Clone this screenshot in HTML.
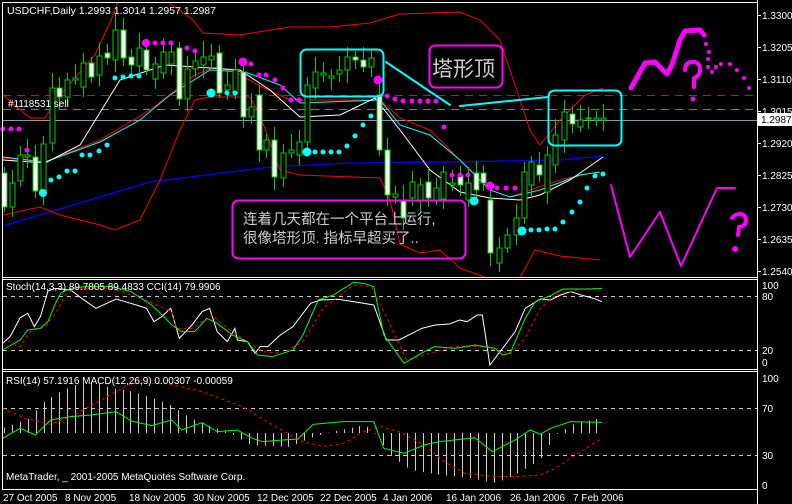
<!DOCTYPE html>
<html><head><meta charset="utf-8">
<style>
html,body{margin:0;padding:0;background:#000;width:792px;height:504px;overflow:hidden}
svg{display:block}
text{font-family:"Liberation Sans","Noto Sans CJK SC",sans-serif;fill:#fff}
</style></head><body>
<svg id="s" width="792" height="504" viewBox="0 0 792 504" font-size="10" xmlns="http://www.w3.org/2000/svg">
<rect width="792" height="504" fill="#000"/>
<g id="g"></g>
<g stroke="#fff" fill="none" stroke-width="1">
<line x1="2.5" y1="2.5" x2="757.5" y2="2.5"/>
<line x1="2.5" y1="2.5" x2="2.5" y2="489"/>
<line x1="757.5" y1="0" x2="757.5" y2="504"/>
<line x1="2" y1="277.5" x2="757" y2="277.5"/>
<line x1="2" y1="279.5" x2="757" y2="279.5"/>
<line x1="2" y1="369.5" x2="757" y2="369.5"/>
<line x1="2" y1="371.5" x2="757" y2="371.5"/>
<line x1="2" y1="489.5" x2="757" y2="489.5"/>
</g>
<text x="7" y="14" font-size="10.5">USDCHF,Daily  1.2993 1.3014 1.2957 1.2987</text>
<text x="8" y="107">#1118531 sell</text>
<g font-size="10">
<text x="762" y="19">1.3300</text><text x="762" y="51">1.3205</text><text x="762" y="83">1.3110</text>
<text x="762" y="115">1.3015</text><text x="762" y="147">1.2920</text><text x="762" y="179">1.2825</text>
<text x="762" y="211">1.2730</text><text x="762" y="243">1.2635</text><text x="762" y="275">1.2540</text>
<rect x="758" y="113" width="34" height="13" fill="#fff"/>
<text x="761" y="123" style="fill:#000">1.2987</text>
<text x="762" y="289">100</text><text x="762" y="300">80</text><text x="762" y="354">20</text><text x="762" y="366">0</text>
<text x="762" y="382">100</text><text x="762" y="412">70</text><text x="762" y="459">30</text><text x="762" y="489">0</text>
</g>
<text x="6" y="290">Stoch(14,3,3) 89.7805 89.4833  CCI(14) 79.9906</text>
<text x="6" y="384">RSI(14) 57.1916  MACD(12,26,9) 0.00307 -0.00059</text>
<text x="6" y="480">MetaTrader, _ 2001-2005 MetaQuotes Software Corp.</text>
<g font-size="10">
<text x="3" y="501">27 Oct 2005</text><text x="65" y="501">8 Nov 2005</text><text x="129" y="501">18 Nov 2005</text>
<text x="193" y="501">30 Nov 2005</text><text x="257" y="501">12 Dec 2005</text><text x="320" y="501">22 Dec 2005</text>
<text x="383" y="501">4 Jan 2006</text><text x="446" y="501">16 Jan 2006</text><text x="510" y="501">26 Jan 2006</text>
<text x="573" y="501">7 Feb 2006</text>
</g>
<g fill="none" stroke-linejoin="round" stroke-linecap="round">
<rect x="300.5" y="49.5" width="83" height="47" rx="6" stroke="#0ff" stroke-width="2"/>
<rect x="548.5" y="90.5" width="73" height="55" rx="6" stroke="#0ff" stroke-width="2"/>
<line x1="386" y1="62" x2="450" y2="105" stroke="#0ff" stroke-width="2"/>
<line x1="460" y1="106" x2="548" y2="97" stroke="#0ff" stroke-width="2"/>
<rect x="429.5" y="45.5" width="73" height="42" rx="6" stroke="#f0f" stroke-width="2"/>
<rect x="232.5" y="200.5" width="233" height="58" rx="6" stroke="#f0f" stroke-width="2"/>
<polyline points="631,88 640,72 645,63 655,62 663,70 667,74 672,65 680,40 685,31 700,30 704,35" stroke="#f0f" stroke-width="5"/>
<polyline points="611,185 630,257 660,212 681,266 717,188 735,188" stroke="#f0f" stroke-width="2"/>
<path d="M685,70 q0,-8 8,-8 q7,0 7,8 q0,6 -6,8 l0,9" stroke="#f0f" stroke-width="4"/>
<path d="M732,218 q3,-4 8,-4 q6,0 6,7 q0,5 -7,6 l-1,8" stroke="#f0f" stroke-width="4"/>
</g>
<g fill="#f0f">
<circle cx="693" cy="99" r="2.5"/><circle cx="735" cy="249" r="3"/>
<circle cx="706" cy="44" r="2"/><circle cx="709" cy="52" r="2"/><circle cx="708" cy="59" r="2"/><circle cx="708" cy="67" r="2"/><circle cx="712" cy="72" r="2"/><circle cx="716" cy="67" r="2"/><circle cx="721" cy="64" r="2"/><circle cx="730" cy="64" r="2"/><circle cx="737" cy="70" r="2"/><circle cx="744" cy="78" r="2"/><circle cx="749" cy="88" r="2"/>
</g>
<text x="432" y="76" style="font-size:21px;fill:#ccc">塔形顶</text>
<text x="243" y="224" style="font-size:14.5px;fill:#ccc">连着几天都在一个平台上运行,</text>
<text x="243" y="243" style="font-size:14.5px;fill:#ccc">很像塔形顶. 指标早超买了..</text>
</svg>
<script>
var g=document.getElementById('g'),NS='http://www.w3.org/2000/svg';
function el(t,a){var e=document.createElementNS(NS,t);for(var k in a)e.setAttribute(k,a[k]);g.appendChild(e);return e;}
function pl(pts,c,w,d){el('polyline',{points:pts.map(function(p){return p[0]+','+p[1]}).join(' '),fill:'none',stroke:c,'stroke-width':w||1,'stroke-dasharray':d||'none'});}
el('line',{x1:3,y1:95.5,x2:757,y2:95.5,stroke:'#f00','stroke-dasharray':'8,6'});
el('line',{x1:3,y1:109.5,x2:757,y2:109.5,stroke:'#0c0','stroke-dasharray':'8,6'});
el('line',{x1:3,y1:120.5,x2:757,y2:120.5,stroke:'#8899aa'});
[296.5,350.5,408.5,455.5].forEach(function(y){el('line',{x1:3,y1:y,x2:757,y2:y,stroke:'#ccc','stroke-dasharray':'4,4'});});
pl([[3,226],[150,182],[270,167],[350,163],[450,162],[560,160],[603,156]],'#00f',1.3);
pl([[3,95],[30,118],[45,118],[60,95],[95,55],[112,18],[118,2]],'#f00');
pl([[168,2],[193,20],[203,33],[240,35],[290,27],[330,27],[370,23],[400,14],[460,12],[480,20],[500,40],[515,85],[530,130],[540,145],[560,120],[585,95],[603,88]],'#f00');
pl([[3,158],[45,162],[100,140],[150,110],[195,75],[215,67],[235,72],[260,86],[290,100],[330,100],[380,100],[400,118],[430,130],[460,160],[490,190],[510,197],[530,190],[560,180],[590,173]],'#f00');
pl([[3,215],[40,207],[60,215],[100,225],[115,230],[140,220],[160,180],[180,130],[195,100],[210,97],[250,97],[260,115],[280,170],[300,175],[380,178],[390,200],[400,244],[420,253],[440,250],[460,268],[487,278]],'#f00');
pl([[520,278],[535,250],[560,256],[600,260]],'#f00');
pl([[3,157],[45,162],[100,142],[140,120],[170,95],[210,70],[245,72],[280,85],[300,103],[380,100],[400,125],[430,135],[460,160],[490,190],[510,197],[540,190],[580,175],[600,172]],'#0ff');
pl([[3,160],[45,163],[80,145],[120,80],[165,65],[240,70],[270,90],[300,117],[340,115],[375,98],[400,130],[430,170],[460,192],[490,198],[520,200],[540,195],[570,180],[603,157]],'#fff');
var C=[[4,173,207,1],[12,183,207,0],[20,155,181,0],[27,155,157,0],[35,157,191,1],[43,144,193,0],[52,88,143,0],[59,88,97,1],[67,80,97,0],[75,78,80,0],[83,63,87,0],[91,63,77,1],[99,56,75,0],[107,53,58,1],[115,30,60,0],[123,30,58,1],[131,57,65,1],[139,48,66,0],[146,50,70,1],[155,64,79,0],[163,52,73,0],[171,52,64,0],[179,48,99,1],[187,69,99,0],[195,61,69,0],[203,57,65,0],[211,56,60,0],[219,53,93,1],[227,85,90,0],[235,70,93,0],[243,72,117,1],[251,107,117,0],[259,95,150,1],[266,140,150,0],[274,140,177,1],[283,153,178,0],[291,150,153,0],[299,142,155,0],[307,85,142,0],[315,72,88,0],[323,73,75,0],[331,76,78,0],[339,70,74,0],[347,57,70,0],[355,57,60,1],[363,60,67,1],[371,58,67,0],[379,95,150,1],[387,150,195,1],[395,194,197,0],[403,200,218,1],[412,182,198,0],[420,185,200,0],[428,182,198,1],[436,188,200,0],[443,172,199,0],[452,183,185,0],[460,175,185,1],[468,183,200,0],[476,173,190,1],[483,173,183,1],[490,200,253,1],[499,248,263,0],[507,235,248,0],[516,218,235,0],[524,172,218,0],[531,162,185,0],[539,165,175,1],[547,155,192,0],[555,135,165,0],[564,112,140,0],[572,114,124,1],[580,120,127,0],[588,118,119,0],[596,118,120,0],[603,118,120,0]];
C.forEach(function(c,i){var w=((i*7)%11)+6;el('line',{x1:c[0]+.5,y1:c[1]-w,x2:c[0]+.5,y2:c[2]+(((i*5)%9)+5),stroke:'#0c0'});
el('rect',{x:c[0]-2,y:c[1],width:5,height:Math.max(c[2]-c[1],1),fill:c[3]?'#fff':'#000',stroke:'#0c0','stroke-width':1});});
function dots(a,col){a.forEach(function(p){el('circle',{cx:p[0],cy:p[1],r:p[2]||2.5,fill:col});});}
dots([[3,129],[11,129],[19,129],[27,150],[146,43,4],[155,43],[163,43],[171,43],[187,48],[195,51],[243,62,4.5],[251,64],[259,75],[266,75],[275,80],[283,88],[291,100],[299,100],[378,80,4.5],[387,96],[395,99],[403,101],[412,101],[420,101],[428,101],[436,101],[444,127],[452,175],[460,175],[468,175],[490,186,4.5],[497,188],[506,188],[515,188]],'#f0f');
dots([[43,193,4],[51,180],[59,177],[67,171],[75,171],[82,155],[90,155],[99,151],[107,145],[115,78],[123,77],[131,76],[139,76],[211,93,4.5],[227,93],[235,93],[307,152,4.5],[315,152],[323,152],[331,152],[339,152],[347,146],[355,136],[363,125],[371,116],[474,201,4.5],[522,231,4.5],[531,230],[539,230],[547,229],[555,229],[563,222],[572,212],[580,202],[587,188],[595,176],[603,174]],'#0ff');
function Z(a){return a.map(function(p){return [p[0]/1.98,p[1]/3+275];});}
pl(Z([[5,205],[20,185],[40,128],[55,115],[68,155],[80,125],[95,48],[110,40],[140,45],[160,68],[190,100],[230,72],[270,90],[290,100],[305,140],[320,125],[338,100],[355,190],[380,150],[400,110],[415,100],[430,170],[450,200],[465,160],[470,195],[490,200],[505,235],[515,215],[530,215],[555,180],[580,155],[615,85],[635,75],[670,73],[700,80],[740,90],[765,195],[790,195],[835,160],[862,150],[890,147],[910,135],[925,140],[945,120],[955,120],[970,270],[990,230],[1020,170],[1040,100],[1070,72],[1090,75],[1110,60],[1130,50],[1155,62],[1175,70],[1192,80]]),'#fff');
pl(Z([[5,190],[40,215],[60,170],[90,155],[110,115],[130,60],[150,40],[220,40],[280,70],[340,110],[350,160],[380,160],[420,120],[450,160],[480,190],[520,230],[560,235],[600,200],[640,100],[670,65],[700,30],[735,35],[770,140],[805,255],[840,240],[900,215],[960,215],[980,225],[1010,235],[1040,190],[1070,100],[1100,60],[1150,42],[1192,40]]),'#f00',1,'3,3');
pl(Z([[5,225],[40,195],[55,165],[80,160],[95,140],[110,85],[120,55],[140,40],[170,35],[220,35],[260,50],[300,90],[325,125],[340,150],[360,170],[385,170],[410,130],[430,145],[460,180],[490,200],[510,240],[540,245],[580,225],[600,180],[630,75],[660,60],[700,22],[720,25],[740,35],[760,180],[800,265],[840,230],[860,215],[900,220],[940,210],[980,220],[995,240],[1010,235],[1040,130],[1060,80],[1090,62],[1115,42],[1170,42],[1192,40]]),'#0f0');
var K=[[3,428],[30,418],[40,404],[50,398],[60,392],[75,385],[95,383],[110,388],[130,391],[150,397],[170,405],[190,418],[215,428],[230,433],[250,445],[290,447],[310,438],[330,432],[350,428],[365,425],[375,433],[390,455],[410,470],[440,475],[470,478],[495,483],[515,475],[540,460],[555,435],[575,423],[603,418]];
function interp(x){for(var i=1;i<K.length;i++){if(x<=K[i][0]){var a=K[i-1],b=K[i];return a[1]+(b[1]-a[1])*(x-a[0])/(b[0]-a[0]);}}return K[K.length-1][1];}
for(var x=4;x<=604;x+=7.9){var y=interp(x);el('line',{x1:Math.round(x)+.5,y1:433,x2:Math.round(x)+.5,y2:y,stroke:'#ccc'});}
pl(Z([[5,400],[50,430],[100,448],[140,425],[200,375],[260,325],[330,325],[400,350],[480,395],[540,450],[600,500],[640,515],[680,505],[720,470],[755,455],[790,470],[840,510],[880,560],[920,595],[980,605],[1020,605],[1070,600],[1100,580],[1140,540],[1190,492]]),'#f00',1,'3,3');
pl(Z([[5,490],[40,460],[70,480],[100,435],[140,425],[180,420],[230,410],[260,438],[300,452],[340,435],[360,465],[400,443],[430,470],[470,465],[500,490],[520,500],[560,495],[590,492],[620,448],[680,440],[740,440],[760,520],[800,535],[840,510],[870,500],[900,495],[940,488],[975,530],[1020,495],[1050,465],[1070,478],[1090,460],[1130,440],[1192,442]]),'#0f0');
[15,47,79,111,143,175,207,239,271].forEach(function(y){el('line',{x1:757,y1:y+.5,x2:761,y2:y+.5,stroke:'#fff'});});
</script>
</body></html>
